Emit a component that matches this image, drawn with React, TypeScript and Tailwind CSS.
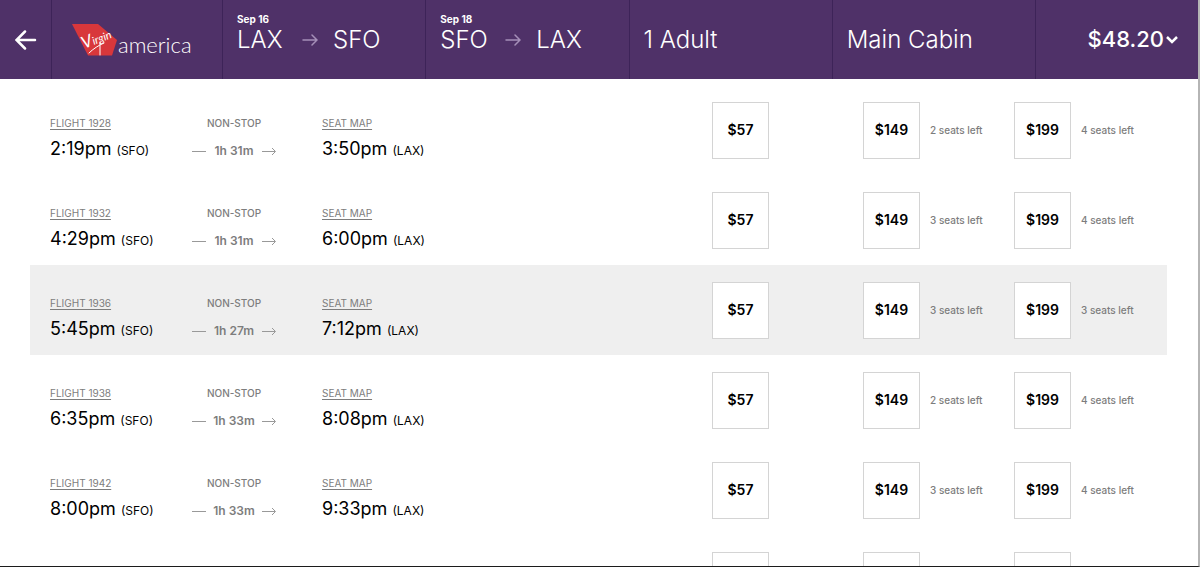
import { clsx } from "clsx";

type Fare = { price: number; seats?: number };

type Flight = {
  id: number;
  departs: string;
  arrives: string;
  duration: string;
  fares: Fare[];
};

const FLIGHTS: Flight[] = [
  {
    id: 1928,
    departs: "2:19pm",
    arrives: "3:50pm",
    duration: "1h 31m",
    fares: [{ price: 57 }, { price: 149, seats: 2 }, { price: 199, seats: 4 }],
  },
  {
    id: 1932,
    departs: "4:29pm",
    arrives: "6:00pm",
    duration: "1h 31m",
    fares: [{ price: 57 }, { price: 149, seats: 3 }, { price: 199, seats: 4 }],
  },
  {
    id: 1936,
    departs: "5:45pm",
    arrives: "7:12pm",
    duration: "1h 27m",
    fares: [{ price: 57 }, { price: 149, seats: 3 }, { price: 199, seats: 3 }],
  },
  {
    id: 1938,
    departs: "6:35pm",
    arrives: "8:08pm",
    duration: "1h 33m",
    fares: [{ price: 57 }, { price: 149, seats: 2 }, { price: 199, seats: 4 }],
  },
  {
    id: 1942,
    departs: "8:00pm",
    arrives: "9:33pm",
    duration: "1h 33m",
    fares: [{ price: 57 }, { price: 149, seats: 3 }, { price: 199, seats: 4 }],
  },
];

const ACTIVE_FLIGHT = 1936;

function Logo() {
  return (
    <svg viewBox="0 0 122 34" className="h-[34px] w-[122px]" role="img" aria-label="Virgin America">
      <path d="M0 1H26L45 17L40 32.500H16Z" fill="#d8373b" />
      <text
        x="12"
        y="26"
        transform="rotate(-22 12 26)"
        fill="#fff"
        className="font-['Lato'] text-[11px] italic"
      >
        <tspan className="text-[17px]">V</tspan>irgin
      </text>
      {/* flourish under the script */}
      <path
        d="M17 30C21 26 27 22 32 20M28 19V32"
        fill="none"
        stroke="#fff"
        strokeWidth="1"
        strokeLinecap="round"
      />
      <text x="46" y="30" fill="#fff" className="font-['Lato'] text-[22px] font-light">
        america
      </text>
    </svg>
  );
}

function Leg({ date, from, to }: { date: string; from: string; to: string }) {
  return (
    <button className="flex flex-1 flex-col border-r border-[#3d2358] pt-3 pl-[14px] text-left">
      <span className="text-[10px] leading-[14px] font-bold">{date}</span>
      <span className="flex items-center text-2xl leading-[28px] font-light">
        <span className="w-[65px]">{from}</span>
        <svg
          viewBox="0 0 16 12"
          className="mr-[15px] h-3 w-4 text-[#a58fb8]"
          fill="none"
          stroke="currentColor"
          strokeWidth="1.500"
          strokeLinecap="round"
          aria-hidden="true"
        >
          <path d="M1 6H15M10 1L15 6L10 11" />
        </svg>
        {to}
      </span>
    </button>
  );
}

function Header() {
  return (
    <header className="flex h-[79px] shrink-0 bg-[#4f3168] text-white">
      <button
        aria-label="Back"
        className="flex w-[52px] items-center justify-center border-r border-[#3d2358]"
      >
        <svg
          viewBox="0 0 22 20"
          className="h-5 w-[22px]"
          fill="none"
          stroke="#fff"
          strokeWidth="2.500"
          strokeLinecap="round"
        >
          <path d="M20 10H2M10 1.500L1.500 10L10 18.500" />
        </svg>
      </button>
      <a href="#" className="flex w-[171px] items-center border-r border-[#3d2358] pl-5">
        <Logo />
      </a>
      <Leg date="Sep 16" from="LAX" to="SFO" />
      <Leg date="Sep 18" from="SFO" to="LAX" />
      <button className="flex-1 border-r border-[#3d2358] pl-[14px] text-left text-2xl font-light">
        1 Adult
      </button>
      <button className="flex-1 border-r border-[#3d2358] pl-[14px] text-left text-2xl font-light">
        Main Cabin
      </button>
      <button className="flex w-[162px] items-center justify-end pr-[19px] text-[22px] font-medium">
        $48.20
        <svg
          viewBox="0 0 14 10"
          className="ml-px h-[10px] w-[14px]"
          fill="none"
          stroke="#fff"
          strokeWidth="2.500"
          aria-hidden="true"
        >
          <path d="M2 2L7 7L12 2" />
        </svg>
      </button>
    </header>
  );
}

function Stop({ link, time, airport }: { link: string; time: string; airport: string }) {
  return (
    <td className="p-0 pt-[30px] align-top">
      <div className="flex flex-col items-start gap-[6px]">
        <a
          href="#"
          className="text-[10px] leading-4 text-[#7d7d7d] underline underline-offset-2"
        >
          {link}
        </a>
        <div className="text-lg leading-6 text-black">
          {time} <span className="text-xs">({airport})</span>
        </div>
      </div>
    </td>
  );
}

function FareCell({ fare }: { fare: Fare }) {
  return (
    <td className="p-0">
      <div className="flex items-center gap-[10px]">
        <button className="size-[57px] border border-[#d4d4d4] bg-white text-sm font-semibold text-black">
          ${fare.price}
        </button>
        {fare.seats && (
          <span className="text-[10px] font-medium text-[#7d7d7d]">{fare.seats} seats left</span>
        )}
      </div>
    </td>
  );
}

function FlightRow({ flight }: { flight: Flight }) {
  return (
    <tr className={clsx("h-[90px]", flight.id === ACTIVE_FLIGHT && "bg-[#efefef]")}>
      <td className="p-0" />
      <Stop link={`FLIGHT ${flight.id}`} time={flight.departs} airport="SFO" />
      <td className="p-0 pt-[30px] align-top text-[#7d7d7d]">
        <div className="flex w-[84px] flex-col items-center gap-2">
          <span className="text-[10px] leading-4 font-medium">NON-STOP</span>
          <span className="flex w-full items-center justify-between text-xs leading-6 font-semibold">
            <span className="h-px w-[14px] bg-[#999]" />
            {flight.duration}
            <svg
              viewBox="0 0 14 8"
              className="h-2 w-[14px]"
              fill="none"
              stroke="#999"
              strokeWidth="1"
              aria-hidden="true"
            >
              <path d="M0 4.500H13M10 1L13.500 4.500L10 8" />
            </svg>
          </span>
        </div>
      </td>
      <Stop link="SEAT MAP" time={flight.arrives} airport="LAX" />
      {flight.fares.map((fare) => (
        <FareCell key={fare.price} fare={fare} />
      ))}
    </tr>
  );
}

export default function App() {
  return (
    <div className="flex h-screen flex-col overflow-hidden border-r-2 border-b border-r-[#b5b5b5] border-b-[#1c1c1c] bg-white font-['Inter',sans-serif]">
      <Header />
      <main className="min-h-0 flex-1 overflow-hidden pt-[6px] pr-[31px] pl-[30px]">
        <table className="w-full table-fixed border-collapse">
          <colgroup>
            <col className="w-5" />
            <col className="w-[142px]" />
            <col className="w-[130px]" />
            <col />
            <col className="w-[151px]" />
            <col className="w-[151px]" />
            <col className="w-[153px]" />
          </colgroup>
          <tbody>
            {FLIGHTS.map((flight) => (
              <FlightRow key={flight.id} flight={flight} />
            ))}
            <tr className="h-[90px]">
              <td colSpan={4} />
              {["Lowest fare", "Middle fare", "Highest fare"].map((label) => (
                <td key={label} className="p-0">
                  <button
                    aria-label={label}
                    className="block size-[57px] border border-[#d4d4d4] bg-white"
                  />
                </td>
              ))}
            </tr>
          </tbody>
        </table>
      </main>
    </div>
  );
}
